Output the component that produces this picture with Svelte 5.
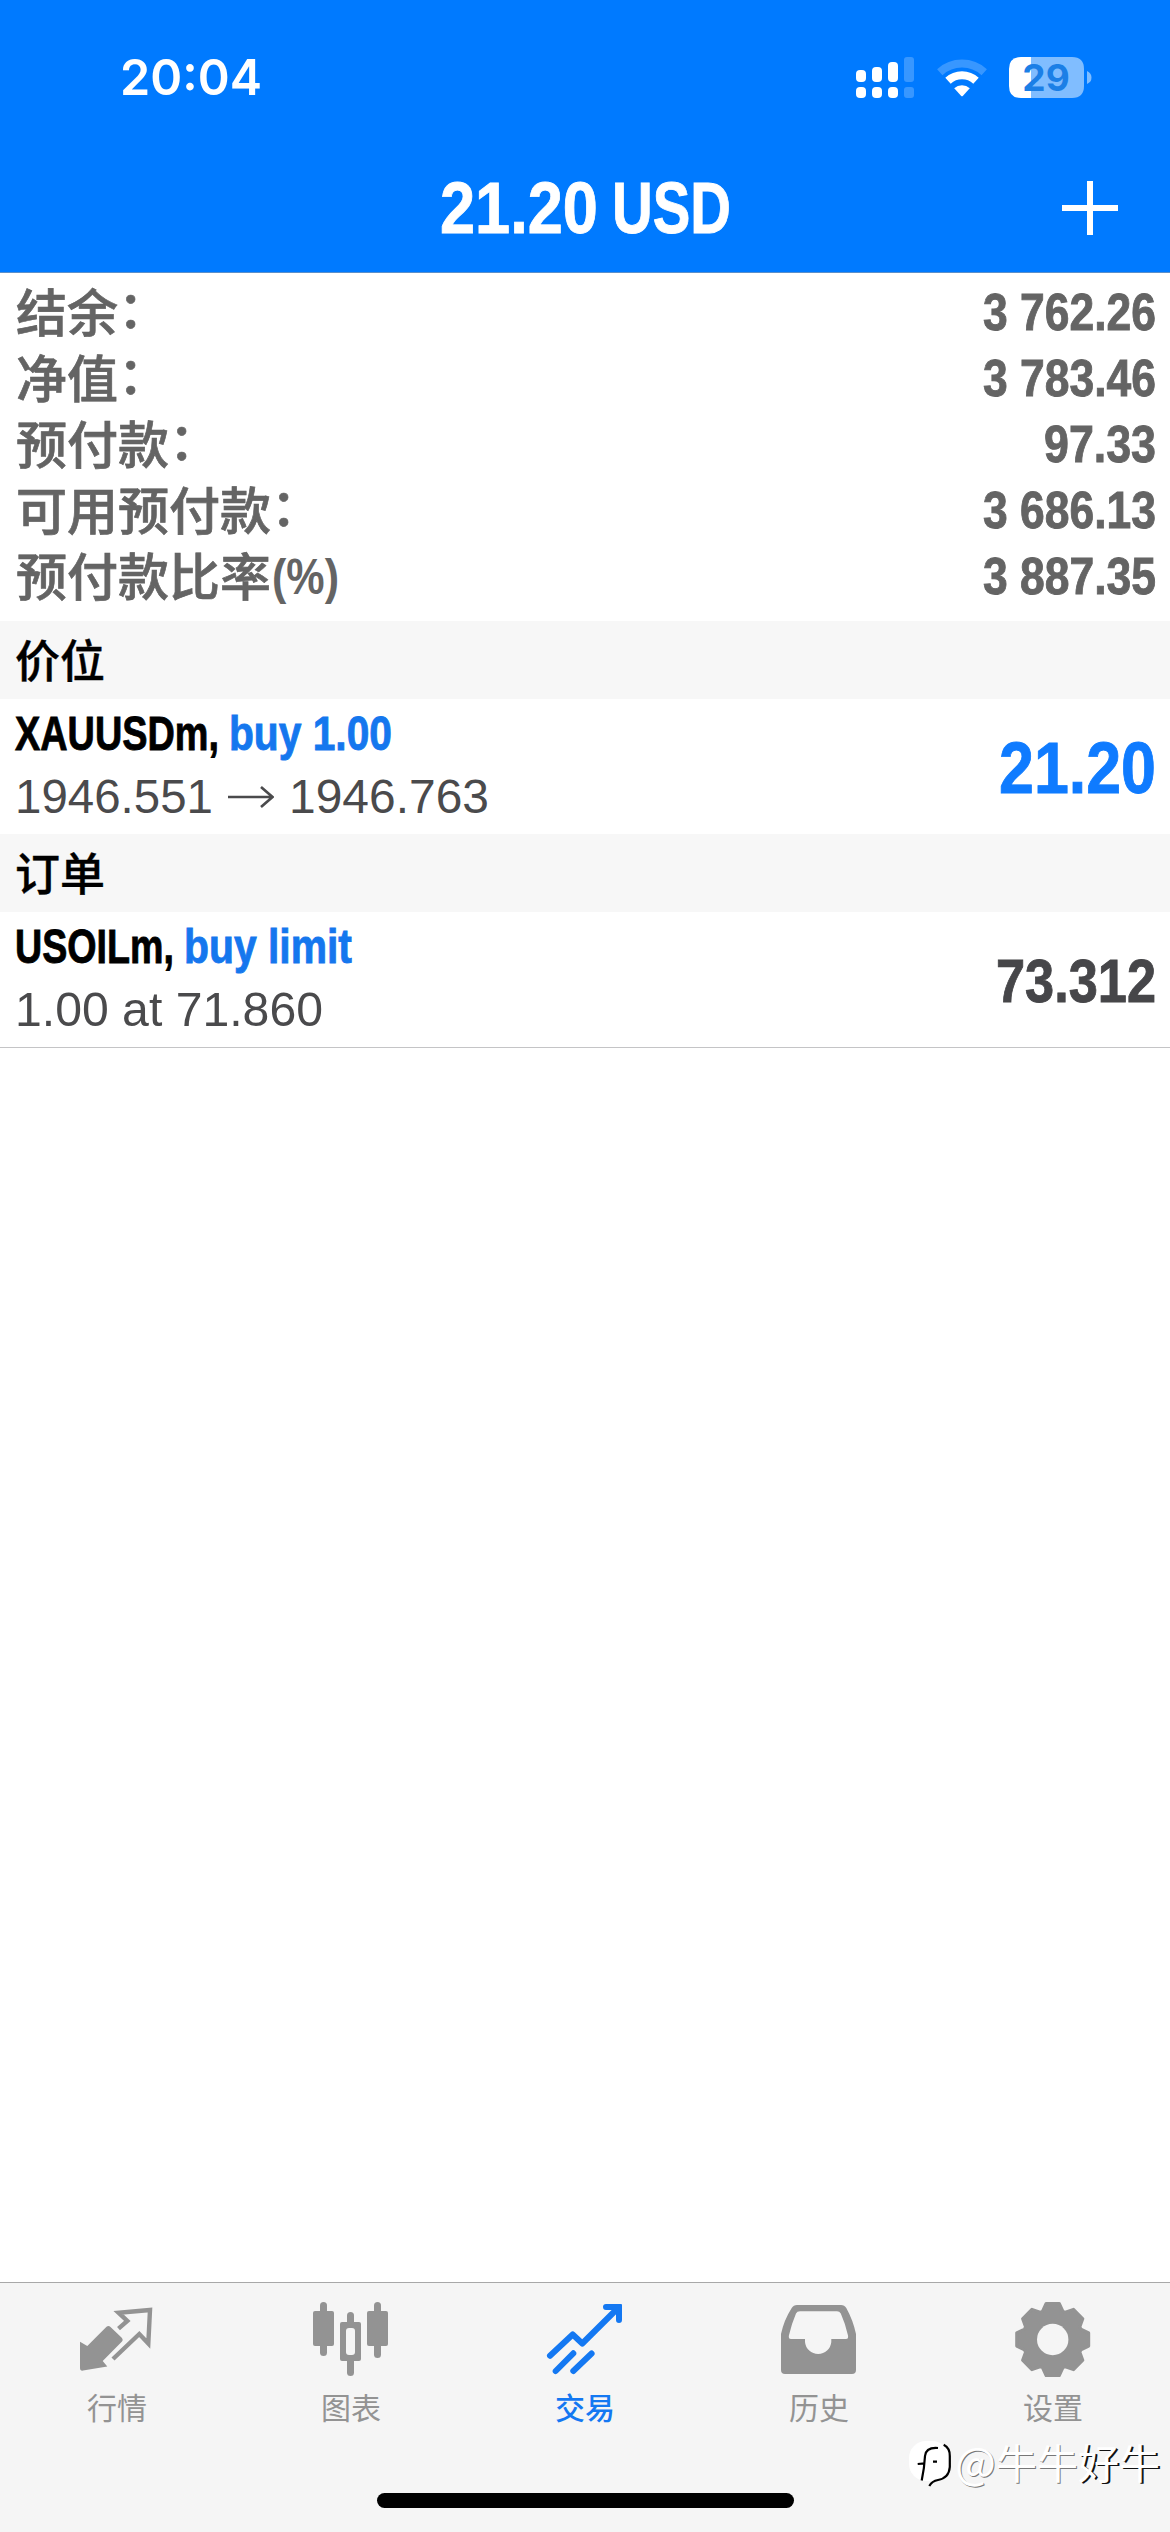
<script>
	const account = [
		{ label: '结余', colon: true, value: '3 762.26', width: 173 },
		{ label: '净值', colon: true, value: '3 783.46', width: 173 },
		{ label: '预付款', colon: true, value: '97.33', width: 112 },
		{ label: '可用预付款', colon: true, value: '3 686.13', width: 173 },
		{ label: '预付款比率', suffix: '(%)', value: '3 887.35', width: 173 }
	];

	const tabs = [
		{ id: 'quotes', label: '行情' },
		{ id: 'charts', label: '图表' },
		{ id: 'trade', label: '交易' },
		{ id: 'history', label: '历史' },
		{ id: 'settings', label: '设置' }
	];

	let active = $state('trade');

	// condense a text horizontally to the given width
	function squeeze(node, width) {
		const natural = node.getComputedTextLength();
		if (natural) node.setAttribute('transform', `scale(${width / natural} 1)`);
	}

	// four outline points per tooth, eight teeth
	const tooth = [[-10.3, -28.2], [-6.6, -36], [6.6, -36], [10.3, -28.2]];
	const gear = Array.from({ length: 8 }, (_, i) => {
		const a = (i * Math.PI) / 4;
		return tooth
			.map(([x, y]) => [
				(x * Math.cos(a) - y * Math.sin(a)).toFixed(2),
				(x * Math.sin(a) + y * Math.cos(a)).toFixed(2)
			].join(','))
			.join(' ');
	}).join(' ');
</script>

{#snippet fit(text, width, size, kind)}
	<svg class="fit {kind}" {width} height={Math.round(size * 0.69)}>
		<text x="0" y={Math.round(size * 0.69)} font-size={size} use:squeeze={width}>{text}</text>
	</svg>
{/snippet}

{#snippet icon(id)}
	<svg class="icon" width="80" height="80" viewBox="0 0 80 80">
		{#if id === 'quotes'}
			<path class="fill" d="M3 41.7 L10.3 46 L29.5 26.8 Q31.5 25 33.5 27 L45 38 Q46.5 40 45 41.6 L25.7 61 L30.3 66.5 L6 70.6 Q3 71 3 68 Z" />
			<path class="line" stroke-width="4.4" d="M41.5 28.6 L50.3 21 L41.5 12.7 L73 10 L71.3 43.5 L62.3 34 L36 59" />
		{:else if id === 'charts'}
			<g class="fill">
				<rect x="2" y="11" width="21" height="35" rx="2" />
				<rect x="9" y="2" width="7" height="54" rx="3.5" />
				<rect x="56" y="11" width="21" height="35" rx="2" />
				<rect x="63" y="2" width="7" height="56" rx="3.5" />
				<rect x="29" y="22" width="21" height="39" rx="2" />
				<rect x="36" y="12" width="7" height="64" rx="3.5" />
			</g>
			<rect class="hole" x="35" y="28" width="9" height="27" rx="3" />
		{:else if id === 'trade'}
			<path class="line round" stroke-width="6" d="M5 55.7 L27.7 34.5 L37.3 43.5 L73 8 M61 7 L74 7 L74 20" />
			<path class="fill" d="M62 4 H76 Q77 4 77 5 V19 H73 L71 10 L62 9 Z" />
			<path class="line round" stroke-width="6" d="M10.7 71 L28.3 53.3 M28.3 71 L46.6 53.5" />
		{:else if id === 'history'}
			<path class="fill" fill-rule="evenodd" d="M18 5 H62 Q65.5 5 67.3 8 Q74 20 77 34 V70 Q77 74 73 74 H6 Q2 74 2 70 V34 Q5 20 12.7 8 Q14.5 5 18 5 Z M21 11.3 Q18 11.3 17 13.5 Q12.5 24 9.9 35.5 Q9.3 39 12 39 H26 V42 A13.2 13.2 0 0 0 52.3 42 V39 H67 Q69.6 39 69 35.5 Q66.5 24 61.8 13.5 Q60.5 11.3 58 11.3 Z" />
		{:else}
			<g transform="translate(39.7 39.5)">
				<polygon class="fill line" stroke-width="3" points={gear} />
				<circle class="hole" r="15.7" />
			</g>
		{/if}
	</svg>
{/snippet}

<div class="screen">
	<header>
		<div class="status">
			{@render fit('20:04', 142, 50, 'time')}
			<div class="indicators">
				<svg class="signal" width="58" height="41" viewBox="0 0 58 41">
					<rect x="0" y="13" width="10" height="12" rx="4" />
					<rect x="16" y="10" width="10" height="15" rx="4" />
					<rect x="32" y="5" width="10" height="20" rx="4" />
					<rect x="0" y="30" width="10" height="11" rx="4" />
					<rect x="16" y="30" width="10" height="11" rx="4" />
					<rect x="32" y="30" width="10" height="11" rx="4" />
					<g class="dim">
						<rect x="48" y="0" width="10" height="25" rx="3" />
						<rect x="48" y="30" width="10" height="11" rx="3" />
					</g>
				</svg>
				<svg class="wifi" width="50" height="41" viewBox="0 0 50 41">
					<path class="arc dim" d="M2.8 15.2 A33 33 0 0 1 47.2 15.2" />
					<path class="arc" d="M11 23.8 A20.6 20.6 0 0 1 39 23.8" />
					<path class="dot" d="M17.2 31.2 A11.8 11.8 0 0 1 32.8 31.2 L26 38.8 Q25 39.8 24 38.8 Z" />
				</svg>
				<svg class="battery" width="83" height="41" viewBox="0 0 83 41">
					<path class="rest" d="M22 0 H63 Q75 0 75 12 V29 Q75 41 63 41 H22 Z M78 14 Q82.5 16 82.5 20.5 Q82.5 25 78 27 Z" />
					<path class="level" d="M12 0 H22 V41 H12 Q0 41 0 29 V12 Q0 0 12 0 Z" />
					<text x="37" y="34" text-anchor="middle">29</text>
				</svg>
			</div>
		</div>
		<div class="nav">
			<span></span>
			<h1>
				{@render fit('21.20', 158, 73, 'bold')}
				{@render fit('USD', 119, 73, 'bold')}
			</h1>
			<button class="add" aria-label="add">
				<svg width="56" height="56" viewBox="0 0 56 56"><path d="M28 1 V55 M0 28 H56" /></svg>
			</button>
		</div>
	</header>

	<main>
		<dl>
			{#each account as row}
				<div class="row">
					<dt>
						<span class="label">{row.label}{#if row.colon}<span class="colon">：</span>{/if}</span>
						{#if row.suffix}{@render fit(row.suffix, 67, 50, 'semi')}{/if}
					</dt>
					<dd>{@render fit(row.value, row.width, 52, 'bold')}</dd>
				</div>
			{/each}
		</dl>

		<h2>价位</h2>
		<div class="item">
			<div class="info">
				<div class="symbol">
					{@render fit('XAUUSDm,', 204, 49, 'bold black')}
					{@render fit('buy 1.00', 163, 49, 'bold blue')}
				</div>
				<div class="price">
					{@render fit('1946.551', 198, 48, 'plain')}
					<svg class="arrow" width="46" height="24" viewBox="0 0 46 24"><path d="M0 12 H44 M33 2 L44.5 12 L33 22" /></svg>
					{@render fit('1946.763', 200, 48, 'plain')}
				</div>
			</div>
			{@render fit('21.20', 157, 73, 'bold profit')}
		</div>

		<h2>订单</h2>
		<div class="item last">
			<div class="info">
				<div class="symbol">
					{@render fit('USOILm,', 159, 49, 'bold black')}
					{@render fit('buy limit', 168, 49, 'bold blue')}
				</div>
				<div class="price">{@render fit('1.00 at 71.860', 308, 48, 'plain')}</div>
			</div>
			{@render fit('73.312', 160, 61, 'bold dark')}
		</div>
	</main>

	<footer>
		<nav>
			{#each tabs as tab}
				<button class="tab" class:active={active === tab.id} onclick={() => (active = tab.id)}>
					{@render icon(tab.id)}
					<span>{tab.label}</span>
				</button>
			{/each}
		</nav>
		<div class="home"></div>
		<div class="watermark">
			<svg width="44" height="48" viewBox="0 0 44 48">
				<rect x="0" y="1" width="40" height="40" rx="17" />
				<path d="M29 8 Q17 7 16 16 Q15.5 27 12.7 40.5 M8.7 24 L16 23.3 M24 21.7 H28 M34.7 4.7 Q41 8 40.8 16 V27 Q40 38 29 40 Q23 41 20.3 46" />
			</svg>
			<span><span class="at">@</span>牛牛<span class="heavy">好牛</span></span>
		</div>
	</footer>
</div>

<style>
	:global(body) {
		background: #fff;
	}

	.screen {
		height: 2532px;
		width: 1170px;
		display: flex;
		flex-direction: column;
		overflow: hidden;
		position: relative;
		font-family: 'Liberation Sans', 'Noto Sans CJK SC', sans-serif;
		background: #fff;
	}

	svg {
		display: block;
		flex: none;
	}

	button {
		border: 0;
		padding: 0;
		background: none;
		font: inherit;
	}

	header {
		height: 273px;
		box-sizing: border-box;
		background: #007aff;
		border-bottom: 1px solid #5c8fc9;
		color: #fff;
	}

	.status {
		height: 155px;
		padding: 0 78px 0 120px;
		display: flex;
		align-items: center;
		justify-content: space-between;
	}

	.indicators {
		display: flex;
		align-items: center;
	}

	.signal {
		fill: #fff;
		margin-right: 23px;
	}

	.wifi {
		margin-right: 22px;
	}

	.dim {
		opacity: .22;
	}

	.arc {
		fill: none;
		stroke: #fff;
		stroke-width: 8;
	}

	.dot {
		fill: #fff;
	}

	.rest {
		fill: #80bdff;
	}

	.level {
		fill: #fff;
	}

	.battery {
		overflow: visible;
	}

	.battery text {
		font: 700 37px Inter, sans-serif;
		fill: #1b7fe6;
	}

	.nav {
		height: 105px;
		padding: 0 52px;
		display: grid;
		grid-template-columns: 1fr auto 1fr;
		align-items: center;
	}

	h1, h2, dl, dd {
		margin: 0;
	}

	h1 {
		display: flex;
		gap: 14px;
	}

	.add {
		justify-self: end;
	}

	.add path {
		stroke: #fff;
		stroke-width: 6;
	}

	.fit {
		overflow: visible;
		fill: currentColor;
	}

	.time {
		font-family: Inter, sans-serif;
		font-weight: 600;
	}

	.bold {
		font-weight: 700;
		stroke: currentColor;
		stroke-width: .9;
	}

	.semi {
		font-weight: 700;
	}

	.black {
		color: #000;
	}

	.blue {
		color: #1577ee;
	}

	.profit {
		color: #0f7bff;
	}

	.plain {
		color: #4a4a4c;
	}

	.dark {
		color: #464649;
	}

	main {
		flex: 1;
	}

	dl {
		padding: 6px 14px 12px 16px;
		color: #646464;
	}

	.row {
		height: 66px;
		display: flex;
		align-items: center;
		justify-content: space-between;
	}

	dt {
		display: flex;
		align-items: center;
		font: 500 51px/60px 'Noto Sans CJK SC', sans-serif;
	}

	.label {
		padding-bottom: 5px;
		-webkit-text-stroke: .7px currentColor;
	}

	dt .fit {
		margin-left: 1px;
		font-family: 'Liberation Sans', sans-serif;
	}

	.colon {
		position: relative;
		top: -4px;
	}

	h2 {
		height: 78px;
		padding-left: 15px;
		background: #f7f7f7;
		color: #000;
		font: 500 45px/76px 'Noto Sans CJK SC', sans-serif;
		-webkit-text-stroke: .4px currentColor;
	}

	.item {
		height: 135px;
		box-sizing: border-box;
		padding: 2px 14px 0 15px;
		display: flex;
		align-items: center;
		justify-content: space-between;
	}

	.last {
		height: 136px;
		border-bottom: 1px solid #c4c4c6;
	}

	.info {
		display: flex;
		flex-direction: column;
		gap: 30px;
		padding-bottom: 6px;
	}

	.symbol {
		display: flex;
		gap: 10px;
	}

	.price {
		display: flex;
		align-items: center;
		gap: 15px;
	}

	.arrow path {
		fill: none;
		stroke: #4a4a4c;
		stroke-width: 2.6;
	}

	footer {
		height: 250px;
		box-sizing: border-box;
		border-top: 1px solid #a8a8a8;
		background: #f5f5f5;
	}

	nav {
		display: grid;
		grid-template-columns: repeat(5, 1fr);
		height: 210px;
	}

	.tab {
		display: flex;
		flex-direction: column;
		align-items: center;
		padding-top: 17px;
		color: #939393;
		font: 400 30px/44px 'Noto Sans CJK SC', sans-serif;
	}

	.tab span {
		margin-top: 4px;
	}

	.active {
		color: #1478f2;
	}

	.active span {
		font-weight: 500;
	}

	.fill {
		fill: currentColor;
	}

	.line {
		stroke: currentColor;
	}

	.line:not(.fill) {
		fill: none;
	}

	.line.fill {
		stroke-linejoin: round;
	}

	.round {
		stroke-linecap: round;
		stroke-linejoin: round;
	}

	.hole {
		fill: #f5f5f5;
	}

	.home {
		width: 417px;
		height: 15px;
		margin: 0 auto;
		border-radius: 8px;
		background: #000;
	}

	.watermark {
		position: absolute;
		right: 10px;
		bottom: 39px;
		display: flex;
		align-items: center;
		color: #fff;
		font: 400 41px/52px 'Noto Sans CJK SC', sans-serif;
		text-shadow: 1px 1px 0 #777;
	}

	.watermark > span {
		padding-bottom: 6px;
	}

	.at {
		font-size: 43px;
	}

	.heavy {
		text-shadow: 2px 1px 0 #111;
	}

	.watermark svg {
		margin-right: 2px;
	}

	.watermark rect {
		fill: #fff;
	}

	.watermark path {
		fill: none;
		stroke: #000;
		stroke-width: 2.2;
	}
</style>
